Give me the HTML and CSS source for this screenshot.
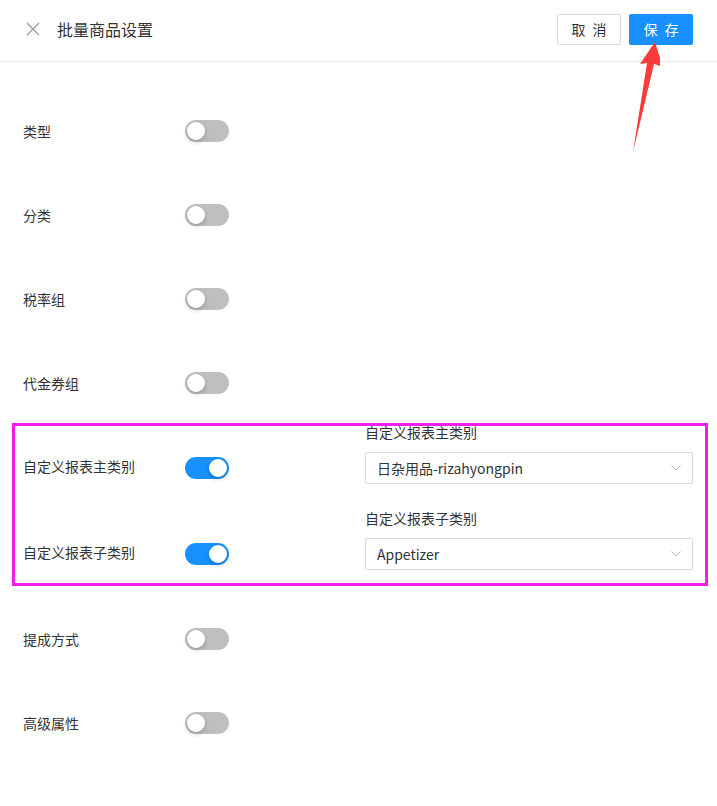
FILE: index.html
```html
<!DOCTYPE html>
<html lang="zh-CN">
<head>
    <meta charset="UTF-8">
    <meta name="viewport" content="width=device-width, initial-scale=1.0">
    <title>批量商品设置</title>
    <link rel="stylesheet" href="styles.css">
</head>
<body>
    <div class="drawer">
        <div class="drawer-header">
            <div class="header-left">
                <span class="close-btn">
                    <svg width="14" height="14" viewBox="0 0 14 14"><path d="M1 1L13 13M13 1L1 13" stroke="#999" stroke-width="1.3" fill="none"/></svg>
                </span>
                <span class="drawer-title">批量商品设置</span>
            </div>
            <div class="header-actions">
                <button class="btn">取 消</button>
                <button class="btn btn-primary">保 存</button>
            </div>
        </div>

        <div class="drawer-body">
            <div class="setting-row">
                <span class="setting-label">类型</span>
                <span class="switch"></span>
            </div>
            <div class="setting-row">
                <span class="setting-label">分类</span>
                <span class="switch"></span>
            </div>
            <div class="setting-row">
                <span class="setting-label">税率组</span>
                <span class="switch"></span>
            </div>
            <div class="setting-row">
                <span class="setting-label">代金券组</span>
                <span class="switch"></span>
            </div>

            <div class="setting-group">
                <div class="setting-row with-field">
                    <span class="setting-label">自定义报表主类别</span>
                    <span class="switch checked"></span>
                    <div class="field">
                        <div class="field-label">自定义报表主类别</div>
                        <div class="select">
                            <span>日杂用品-rizahyongpin</span>
                            <svg width="10" height="6" viewBox="0 0 10 6"><path d="M0.5 0.5L5 5L9.5 0.5" stroke="#bbb" stroke-width="1" fill="none"/></svg>
                        </div>
                    </div>
                </div>
                <div class="setting-row with-field">
                    <span class="setting-label">自定义报表子类别</span>
                    <span class="switch checked"></span>
                    <div class="field">
                        <div class="field-label">自定义报表子类别</div>
                        <div class="select">
                            <span>Appetizer</span>
                            <svg width="10" height="6" viewBox="0 0 10 6"><path d="M0.5 0.5L5 5L9.5 0.5" stroke="#bbb" stroke-width="1" fill="none"/></svg>
                        </div>
                    </div>
                </div>
            </div>

            <div class="setting-row">
                <span class="setting-label">提成方式</span>
                <span class="switch"></span>
            </div>
            <div class="setting-row">
                <span class="setting-label">高级属性</span>
                <span class="switch"></span>
            </div>
        </div>

        <!-- annotation arrow pointing at save -->
        <svg class="arrow" width="40" height="120" viewBox="620 40 40 120">
            <polygon points="655,42 663,67 654,64 633,152 647,63 640,64" fill="#fb3a3a"/>
        </svg>
    </div>
</body>
</html>
```

FILE: styles.css
```css
body {
    margin: 0;
    padding: 0;
    font-family: "Noto Sans CJK SC", "Noto Sans", sans-serif;
    background: #fff;
    color: #333;
}

.drawer {
    position: relative;
    width: 717px;
}

.drawer-header {
    display: flex;
    justify-content: space-between;
    align-items: center;
    height: 61px;
    padding: 0 24px 0 26px;
    border-bottom: 1px solid #ebebeb;
}

.header-left {
    display: flex;
    align-items: center;
    margin-top: -3px;
}

.close-btn {
    display: flex;
    width: 14px;
    height: 14px;
    margin-right: 17px;
}

.drawer-title {
    font-size: 16px;
    color: #333;
}

.header-actions {
    display: flex;
    gap: 8px;
    margin-top: -3px;
}

.btn {
    width: 64px;
    height: 31px;
    padding: 0 0 0 2px;
    border: 1px solid #d9d9d9;
    border-radius: 2px;
    background: #fff;
    color: #333;
    font-family: inherit;
    font-size: 14px;
    letter-spacing: 2px;
    cursor: pointer;
}

.btn-primary {
    background: #1890ff;
    border-color: #1890ff;
    color: #fff;
}

.drawer-body {
    padding: 27px 24px 60px 23px;
}

.setting-row {
    display: flex;
    align-items: center;
    height: 84px;
}

.setting-label {
    width: 162px;
    font-size: 14px;
    color: #333;
}

.switch {
    position: relative;
    display: inline-block;
    width: 44px;
    height: 22px;
    border-radius: 11px;
    background: #bfbfbf;
}

.switch::after {
    content: "";
    position: absolute;
    top: 2px;
    left: 2px;
    width: 18px;
    height: 18px;
    border-radius: 50%;
    background: #fff;
    box-shadow: 0 2px 4px rgba(0, 35, 11, 0.25);
}

.switch.checked {
    background: #1890ff;
}

.switch.checked::after {
    left: 24px;
}

.setting-group {
    position: relative;
}

.setting-group::after {
    content: "";
    position: absolute;
    top: -2px;
    left: -11px;
    right: -15px;
    bottom: 11px;
    border: 3px solid #ee1eee;
    pointer-events: none;
}

.setting-row.with-field {
    height: 86px;
    align-items: flex-end;
    padding-bottom: 27px;
    box-sizing: border-box;
}

.with-field .setting-label,
.with-field .switch {
    margin-bottom: 5px;
}

.with-field .setting-label {
    line-height: 22px;
    margin-bottom: 7px;
}

.field {
    margin-left: auto;
    width: 328px;
}

.field-label {
    font-size: 14px;
    line-height: 20px;
    margin-bottom: 10px;
    color: #333;
}

.select {
    display: flex;
    justify-content: space-between;
    align-items: center;
    height: 32px;
    padding: 0 11px 0 11px;
    border: 1px solid #d9d9d9;
    border-radius: 2px;
    box-sizing: border-box;
    font-size: 14px;
    color: #333;
}

.arrow {
    position: absolute;
    left: 620px;
    top: 40px;
    pointer-events: none;
}
```
